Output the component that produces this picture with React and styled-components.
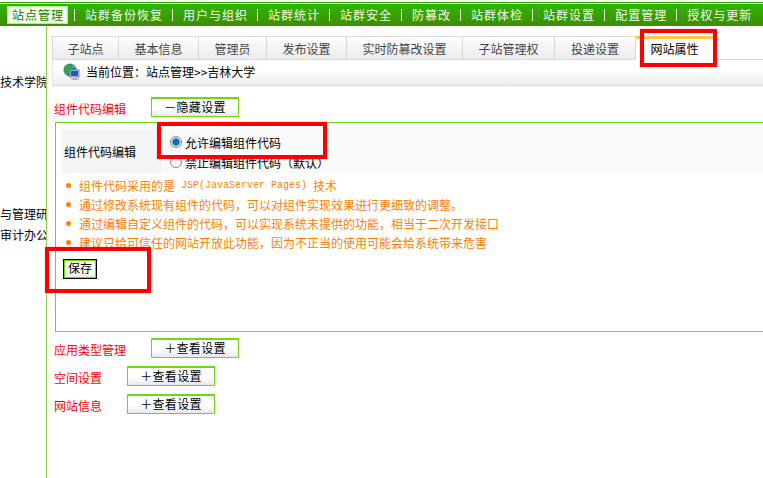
import React from 'react';
import styled, { createGlobalStyle } from 'styled-components';

const GlobalStyle = createGlobalStyle`
    html, body {
        margin: 0;
        padding: 0;
        background: #fff;
        overflow: hidden;
    }
    body {
        font-family: "Noto Sans CJK SC", "Liberation Sans", sans-serif;
        font-size: 12px;
        color: #000;
    }
`;

const Page = styled.div`
    position: relative;
    width: 763px;
    height: 478px;
    overflow: hidden;
`;

// 상단 메뉴
const TopLine = styled.div`
    height: 1px;
    margin: 2px 0 1px;
    background: #34a800;
`;

const Nav = styled.div`
    display: flex;
    align-items: center;
    height: 22px;
    padding-left: 7px;
    background: linear-gradient(#2fb606, #3f8c02);
`;

const NavItem = styled.div`
    height: ${p => (p.$active ? '16px' : 'auto')};
    line-height: 16px;
    padding: ${p => (p.$active ? '0 3px 0 4px' : '0')};
    letter-spacing: 1px;
    font-size: 12px;
    color: ${p => (p.$active ? '#1c7a00' : '#f2fbe8')};
    background: ${p => (p.$active ? '#f4fbee' : 'transparent')};
    border: ${p => (p.$active ? '1px solid #b8e890' : 'none')};
    white-space: nowrap;
`;

const NavSep = styled.div`
    width: 1px;
    height: 12px;
    margin: 0 10px 0 ${p => p.$left || 9}px;
    background: #e8f6d8;
`;

const Body = styled.div`
    display: flex;
    height: 452px;
`;

const Side = styled.div`
    flex: none;
    box-sizing: border-box;
    width: 47px;
    border-right: 1px solid #8fd54e;
    overflow: hidden;
    padding-top: 47px;
`;

const SideText = styled.div`
    width: 60px;
    height: 21px;
    line-height: 18px;
    margin-top: ${p => p.$top || 0}px;
    font-size: 12px;
`;

const Main = styled.div`
    flex: none;
    width: 760px;
    padding: 10px 0 0 5px;
`;

const Tabs = styled.div`
    display: flex;
    height: 24px;
    box-sizing: border-box;
    border-bottom: 1px solid #d9d9d9;
`;

const Tab = styled.div`
    box-sizing: border-box;
    width: ${p => p.$w}px;
    height: ${p => (p.$active ? '24px' : '23px')};
    line-height: ${p => (p.$active ? '20px' : '23px')};
    text-align: center;
    font-size: 12px;
    color: ${p => (p.$active ? '#000' : '#444')};
    background: ${p => (p.$active ? '#fff' : 'linear-gradient(#fdfdfd, #ececec)')};
    border-top: ${p => (p.$active ? '3px solid #ffc848' : '1px solid #d9d9d9')};
    border-right: ${p => (p.$active ? 'none' : '1px solid #d9d9d9')};
    border-left: ${p => (p.$first ? '1px solid #d9d9d9' : 'none')};
`;

const Crumb = styled.div`
    display: flex;
    align-items: center;
    gap: 6px;
    box-sizing: border-box;
    height: 26px;
    padding: 0 0 2px 10px;
    background: linear-gradient(#fff 40%, #ececec);
    border-bottom: 1px solid #d9d9d9;
    border-left: 1px solid #e4e4e4;
    font-size: 12px;
`;

const Row = styled.div`
    display: flex;
    align-items: center;
    height: 20px;
    margin-top: ${p => p.$top}px;
    padding-left: 2px;
`;

const RowLabel = styled.div`
    margin-right: 25px;
    padding-top: 2px;
    font-size: 12px;
    color: #f00;
    white-space: nowrap;
`;

const ToggleBtn = styled.div`
    box-sizing: border-box;
    width: 88px;
    height: 20px;
    line-height: 15px;
    text-align: center;
    font-size: 12px;
    letter-spacing: 0.3px;
    background: linear-gradient(#fff 55%, #e8e8e8);
    border: 1px solid #6fd80e;
    border-width: 2px 1px 1px 1px;
`;

const Panel = styled.div`
    box-sizing: border-box;
    height: 210px;
    margin: 5px 0 6px 3px;
    padding: 6px 0 0 6px;
    border: 1px solid #6fd80e;
    border-right: none;
`;

const FormRow = styled.div`
    display: flex;
    height: 44px;
`;

const FormLabel = styled.div`
    flex: none;
    box-sizing: border-box;
    width: 100px;
    margin-right: 1px;
    padding: 14px 0 0 2px;
    font-size: 12px;
    background: #f5f5f5;
`;

const FormValue = styled.div`
    flex: 1;
    padding: 3px 0 0 7px;
    background: #f9f9f9;
`;

const RadioRow = styled.div`
    display: flex;
    align-items: center;
    gap: 3px;
    height: 20px;
    font-size: 12px;
`;

const RadioDot = styled.span`
    flex: none;
    box-sizing: border-box;
    width: 12px;
    height: 12px;
    border-radius: 50%;
    border: 1px solid #8a8a8a;
    background: ${p => (p.$on
        ? 'radial-gradient(circle, #0a66b4 0, #1c78c0 48%, #dfe6ec 56%, #cfd5da 100%)'
        : 'linear-gradient(#e0e0e0, #fff)')};
`;

const Notes = styled.ul`
    margin: 3px 0 0;
    padding: 0 0 0 4px;
    list-style: none;
`;

const Note = styled.li`
    display: flex;
    align-items: center;
    height: 19px;
    font-size: 12px;
    color: #ff8000;
    white-space: nowrap;
    &::before {
        content: '';
        flex: none;
        width: 5px;
        height: 5px;
        margin-right: 8px;
        border-radius: 50%;
        background: #ff8000;
    }
`;

const Latin = styled.span`
    font-family: "Liberation Mono", monospace;
    font-size: 10px;
`;

const SaveBtn = styled.div`
    box-sizing: border-box;
    width: 34px;
    height: 20px;
    margin: 7px 0 0 1px;
    line-height: 16px;
    text-align: center;
    font-size: 12px;
    background: linear-gradient(#fff 60%, #e4f0d8);
    border: 1px solid #000;
    box-shadow: inset 0 0 0 1px #6fd80e;
`;

// 스크린샷 위에 그려진 빨간 표시
const Mark = styled.div`
    position: absolute;
    box-sizing: border-box;
    left: ${p => p.$x}px;
    top: ${p => p.$y}px;
    width: ${p => p.$w}px;
    height: ${p => p.$h}px;
    border: 4px solid #f00;
    box-shadow: 0 0 1px rgba(255, 0, 0, 0.5);
`;

const GlobeIcon = () => (
    <svg width="17" height="18" viewBox="0 0 17 18">
        <circle cx="7" cy="7" r="6.5" fill="#2a7fd0" />
        <path d="M2 3 L6 1 L9 3 L8 6 L5 8 L6 11 L4 12 L1 8 Z" fill="#3aa83a" />
        <path d="M9 1 L12 3 L11 5 L9 4 Z" fill="#58b848" />
        <rect x="7" y="7" width="9" height="7" fill="#dfe8f0" stroke="#6c7c8c" />
        <rect x="8" y="8" width="7" height="5" fill="#1458c8" />
        <path d="M10 15 H14 V16 H16 V17 H8 V16 H10 Z" fill="#a8b0b8" />
    </svg>
);

const navItems = ['站群备份恢复', '用户与组织', '站群统计', '站群安全', '防篡改', '站群体检', '站群设置', '配置管理', '授权与更新'];

const tabs = [
    ['子站点', 67, true],
    ['基本信息', 80],
    ['管理员', 68],
    ['发布设置', 80],
    ['实时防篡改设置', 116],
    ['子站管理权', 92],
    ['投递设置', 81],
];

const Toggle = ({label, top, children}) => (
    <Row $top={top}>
        <RowLabel>{label}</RowLabel>
        <ToggleBtn>{children}</ToggleBtn>
    </Row>
);

const App = () => (
    <Page>
        <GlobalStyle />
        <TopLine />
        <Nav>
            <NavItem $active>站点管理</NavItem>
            <NavSep $left={6} />
            {navItems.map((item, i) => (
                <React.Fragment key={item}>
                    <NavItem>{item}</NavItem>
                    {i < navItems.length - 1 && <NavSep />}
                </React.Fragment>
            ))}
        </Nav>
        <Body>
            <Side>
                <SideText>技术学院</SideText>
                <SideText $top={111}>与管理研</SideText>
                <SideText>审计办公</SideText>
            </Side>
            <Main>
                <Tabs>
                    {tabs.map(([name, w, first]) => (
                        <Tab key={name} $w={w} $first={first}>{name}</Tab>
                    ))}
                    <Tab $w={77} $active>网站属性</Tab>
                </Tabs>
                <Crumb>
                    <GlobeIcon />
                    <span>当前位置：站点管理&gt;&gt;吉林大学</span>
                </Crumb>
                <Toggle label="组件代码编辑" top={11}>－隐藏设置</Toggle>
                <Panel>
                    <FormRow>
                        <FormLabel>组件代码编辑</FormLabel>
                        <FormValue>
                            <RadioRow><RadioDot $on />允许编辑组件代码</RadioRow>
                            <RadioRow><RadioDot />禁止编辑组件代码（默认）</RadioRow>
                        </FormValue>
                    </FormRow>
                    <Notes>
                        <Note>组件代码采用的是 <Latin>&nbsp;JSP(JavaServer Pages)&nbsp;</Latin> 技术</Note>
                        <Note>通过修改系统现有组件的代码，可以对组件实现效果进行更细致的调整。</Note>
                        <Note>通过编辑自定义组件的代码，可以实现系统未提供的功能，相当于二次开发接口</Note>
                        <Note>建议只给可信任的网站开放此功能，因为不正当的使用可能会给系统带来危害</Note>
                    </Notes>
                    <SaveBtn>保存</SaveBtn>
                </Panel>
                <Toggle label="应用类型管理" top={0}>＋查看设置</Toggle>
                <Toggle label="空间设置" top={8}>＋查看设置</Toggle>
                <Toggle label="网站信息" top={8}>＋查看设置</Toggle>
            </Main>
        </Body>
        <Mark $x={640} $y={29} $w={77} $h={38} />
        <Mark $x={157} $y={122} $w={170} $h={37} />
        <Mark $x={45} $y={247} $w={106} $h={46} />
    </Page>
);

export default App;
